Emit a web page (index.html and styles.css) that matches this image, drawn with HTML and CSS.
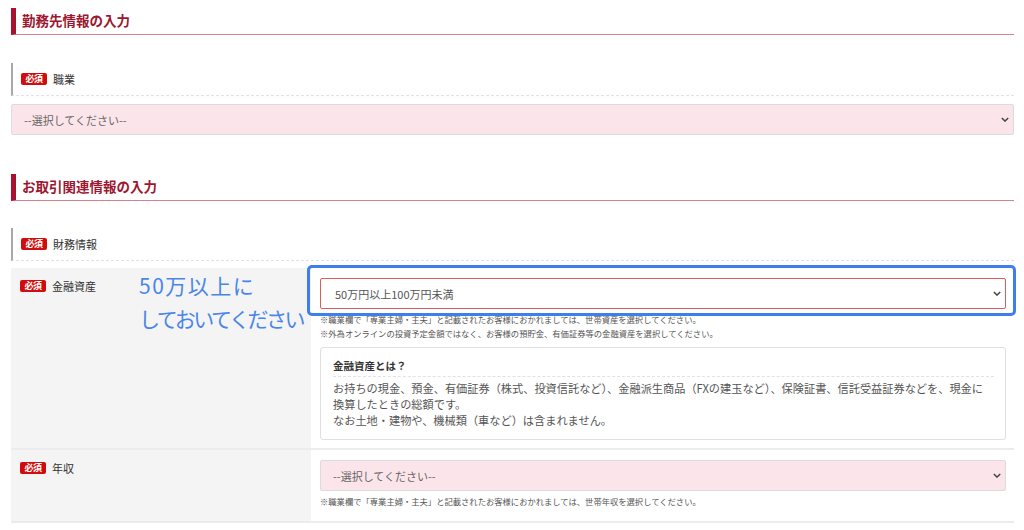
FILE: index.html
```html
<!DOCTYPE html>
<html lang="ja">
<head>
<meta charset="utf-8">
<link rel="stylesheet" href="styles.css">
</head>
<body>
<div class="page">
  <h2 class="sec-title">勤務先情報の入力</h2>
  <div class="field-label"><span class="req">必須</span>職業</div>
  <div class="select pink wide"><span>--選択してください--</span><svg class="chev" viewBox="0 0 10 6"><path d="M1 1l4 4 4-4" fill="none" stroke="#444" stroke-width="1.8"/></svg></div>

  <h2 class="sec-title sec2">お取引関連情報の入力</h2>
  <div class="field-label fl2"><span class="req">必須</span>財務情報</div>

  <div class="table">
    <div class="row">
      <div class="th"><span class="req">必須</span>金融資産</div>
      <div class="td">
        <div class="select white"><span>50万円以上100万円未満</span><svg class="chev" viewBox="0 0 10 6"><path d="M1 1l4 4 4-4" fill="none" stroke="#444" stroke-width="1.8"/></svg></div>
        <p class="note">※職業欄で「専業主婦・主夫」と記載されたお客様におかれましては、世帯資産を選択してください。<br>※外為オンラインの投資予定金額ではなく、お客様の預貯金、有価証券等の金融資産を選択してください。</p>
        <div class="info">
          <div class="info-title">金融資産とは？</div>
          <p class="info-body">お持ちの現金、預金、有価証券（株式、投資信託など）、金融派生商品（FXの建玉など）、保険証書、信託受益証券などを、現金に<br>換算したときの総額です。<br>なお土地・建物や、機械類（車など）は含まれません。</p>
        </div>
      </div>
      <div class="annot-text"><span class="l1">50万以上に</span><span class="l2">しておいてください</span></div>
      <div class="annot-box"></div>
    </div>
    <div class="row">
      <div class="th"><span class="req">必須</span>年収</div>
      <div class="td td-last">
        <div class="select pink"><span>--選択してください--</span><svg class="chev" viewBox="0 0 10 6"><path d="M1 1l4 4 4-4" fill="none" stroke="#444" stroke-width="1.8"/></svg></div>
        <p class="note">※職業欄で「専業主婦・主夫」と記載されたお客様におかれましては、世帯年収を選択してください。</p>
      </div>
    </div>
  </div>
</div>
</body>
</html>
```
FILE: styles.css
```css
* { box-sizing: border-box; }
html, body { margin: 0; padding: 0; background: #fff; }
body {
  font-family: "Noto Sans CJK JP", "Noto Sans", sans-serif;
  color: #333;
}
.page {
  margin-left: 11px;
  width: 1003px;
  padding-top: 8px;
}
.sec-title {
  margin: 0;
  height: 27px;
  border-left: 5px solid #a8122e;
  border-bottom: 1px solid #d7808f;
  padding-left: 6px;
  font-size: 13.5px;
  font-weight: bold;
  color: #9d1630;
  line-height: 25px;
}
.sec2 { margin-top: 39px; }
.field-label {
  margin-top: 28px;
  height: 33px;
  border-left: 2px solid #a8a8a8;
  border-bottom: 1px dashed #e2e2e2;
  padding-left: 8px;
  display: flex;
  align-items: center;
  font-size: 11px;
  color: #333;
}
.field-label.fl2 { margin-top: 27px; }
.req {
  display: inline-block;
  background: #d00c0c;
  color: #fff;
  font-size: 9px;
  font-weight: bold;
  line-height: 12px;
  height: 12px;
  width: 26px;
  text-align: center;
  border-radius: 2px;
  margin-right: 6px;
  letter-spacing: -0.5px;
}
.select {
  height: 31px;
  border: 1px solid #dcdcdc;
  border-radius: 2px;
  display: flex;
  align-items: center;
  justify-content: space-between;
  padding: 0 4px 0 12px;
  font-size: 11px;
  color: #666;
}
.select.pink { background: #fce5ea; }
.select.wide { margin-top: 8px; }
.select.white { background: #fff; border-color: #e05a5a; padding-left: 14px; color: #555; }
.chev { width: 8px; height: 5px; }
.table {
  margin-top: 7px;
}
.row {
  position: relative;
  display: flex;
  border-bottom: 2px solid #ececec;
}
.th {
  width: 300px;
  background: #f4f4f4;
  padding: 11px 0 0 9px;
  font-size: 11px;
  color: #333;
  display: flex;
  align-items: flex-start;
  line-height: 14px;
}
.th .req { margin-top: 1px; }
.td {
  flex: 1;
  padding: 10px 8px 8px 9px;
}
.td.td-last { padding-bottom: 13px; }
.note {
  margin: 3px 0 0;
  font-size: 8.3px;
  line-height: 14px;
  color: #555;
}
.info {
  margin-top: 7px;
  border: 1px solid #e0e0e0;
  border-radius: 3px;
  padding: 10px 11px 11px 12px;
}
.info-title {
  font-size: 10.5px;
  font-weight: bold;
  color: #333;
  padding-bottom: 3px;
  border-bottom: 1px dashed #e2e2e2;
}
.info-body {
  margin: 3px 0 0;
  font-size: 11.2px;
  line-height: 16px;
  color: #555;
  white-space: nowrap;
}
.annot-text {
  position: absolute;
  left: 128px;
  top: 1px;
  color: #4a86e8;
  font-size: 21px;
  line-height: 33px;
  display: flex;
  flex-direction: column;
}
.annot-text .l1 { letter-spacing: 1.5px; }
.annot-text .l2 { letter-spacing: -2.5px; }
.annot-box {
  position: absolute;
  left: 296px;
  top: -3px;
  width: 709px;
  height: 51px;
  border: 3px solid #3f7fec;
  border-radius: 5px;
}
```
